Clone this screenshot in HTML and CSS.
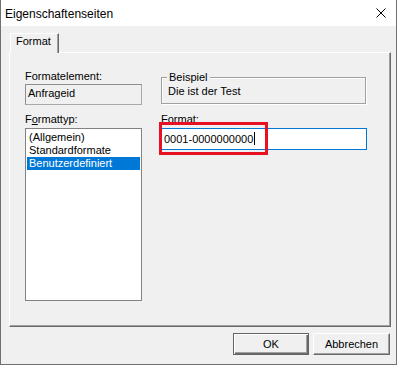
FILE: index.html
```html
<!DOCTYPE html>
<html lang="de">
<head>
    <meta charset="UTF-8">
    <title>Eigenschaftenseiten</title>
    <link rel="stylesheet" href="styles.css">
</head>
<body>

    <div class="window">
        <div class="titlebar">
            <span class="title">Eigenschaftenseiten</span>
            <svg class="close" width="10" height="10" viewBox="0 0 10 10">
                <path d="M0.5 0.5 L9.5 9.5 M9.5 0.5 L0.5 9.5" stroke="#000" stroke-width="1" fill="none"/>
            </svg>
        </div>

        <div class="client">
            <!-- Tab strip -->
            <div class="tabs">
                <div class="tab">Format</div>
            </div>

            <!-- Tab page -->
            <div class="page">
                <div class="cell">
                    <div class="label gap1">Formatelement:</div>
                    <div class="static">Anfrageid</div>
                </div>
                <div class="cell">
                    <div class="group">
                        <div class="legend">Beispiel</div>
                        <div class="sample">Die ist der Test</div>
                    </div>
                </div>

                <div class="cell">
                    <div class="label gap2">F<u>o</u>rmattyp:</div>
                    <div class="list">
                        <div class="item">(Allgemein)</div>
                        <div class="item">Standardformate</div>
                        <div class="item selected">Benutzerdefiniert</div>
                    </div>
                </div>
                <div class="cell marked">
                    <div class="label gap2"><u>F</u>ormat:</div>
                    <div class="field">0001-0000000000<span class="caret"></span></div>
                    <div class="mark"></div>
                </div>
            </div>

            <div class="buttons">
                <div class="btn default">OK</div>
                <div class="btn wide">Abbrechen</div>
            </div>
        </div>
    </div>

</body>
</html>
```

FILE: styles.css
```css
body {
    margin: 0;
    font-family: "Liberation Sans", Arial, sans-serif;
    font-size: 11px;
    line-height: 13px;
    color: #000;
    background: #f0f0f0;
}
.window {
    width: 397px;
    height: 365px;
    box-sizing: border-box;
    border: 1px solid #707070;
    border-top: 0;
    background: #f0f0f0;
}
.titlebar {
    height: 26px;
    background: #fff;
    display: flex;
    align-items: center;
    justify-content: space-between;
    padding: 0 10px 0 4px;
    font-size: 12px;
}
.title {
    line-height: 26px;
    padding-top: 1px;
}
.close {
    display: block;
}
.client {
    padding: 7px 5px 0 8px;
}

/* tabs */
.tabs {
    display: flex;
    height: 19px;
}
.tab {
    position: relative;
    z-index: 1;
    box-sizing: border-box;
    width: 49px;
    height: 20px;
    margin-left: 1px;
    padding: 1px 0 0 5px;
    background: #f0f0f0;
    border-top: 1px solid #fff;
    border-left: 1px solid #fff;
    border-right: 1px solid #696969;
    box-shadow: inset -1px 0 #a0a0a0;
}
.page {
    box-sizing: border-box;
    height: 275px;
    border-top: 1px solid #fff;
    border-left: 1px solid #fff;
    border-right: 1px solid #696969;
    border-bottom: 1px solid #696969;
    box-shadow: inset -1px -1px #a0a0a0;
    padding: 17px 0 0 15px;
    display: grid;
    grid-template-columns: 117px 206px;
    grid-template-rows: 35px auto;
    column-gap: 19px;
    row-gap: 8px;
    align-items: start;
}
.label.gap1 {
    margin-bottom: 1px;
}
.label.gap2 {
    margin-bottom: 2px;
}
.static {
    box-sizing: border-box;
    height: 21px;
    padding: 2px 2px;
    border: 1px solid #a0a0a0;
    border-color: #8e8e8e #a8a8a8 #a8a8a8 #8e8e8e;
    background: #f0f0f0;
}

/* Beispiel group */
.group {
    box-sizing: border-box;
    width: 205px;
    height: 27px;
    margin-top: 7px;
    border: 1px solid #a0a0a0;
    box-shadow: 1px 1px 0 #fff, inset 1px 1px 0 #fff;
}
.legend {
    width: fit-content;
    margin: -7px 0 0 5px;
    padding: 0 2px;
    background: #f0f0f0;
}
.sample {
    margin-top: 1px;
    padding-left: 6px;
}

/* list box */
.list {
    box-sizing: border-box;
    height: 173px;
    padding: 2px 1px;
    border: 1px solid #828282;
    background: #fff;
}
.item {
    height: 13px;
    padding-left: 2px;
}
.item.selected {
    background: #0078d7;
    color: #fff;
}

/* format field */
.marked {
    position: relative;
}
.field {
    box-sizing: border-box;
    height: 22px;
    padding: 3px 2px 0;
    border: 1px solid #0078d7;
    background: #fff;
}
.caret {
    display: inline-block;
    width: 1px;
    height: 13px;
    margin-left: 1px;
    background: #000;
    vertical-align: -2px;
}
.mark {
    position: absolute;
    left: -2px;
    top: 9px;
    width: 109px;
    height: 33px;
    box-sizing: border-box;
    border: 3px solid #e81123;
}

/* buttons */
.buttons {
    display: flex;
    justify-content: flex-end;
    gap: 4px;
    margin-top: 6px;
    padding-right: 1px;
}
.btn {
    box-sizing: border-box;
    width: 76px;
    height: 22px;
    line-height: 20px;
    text-align: center;
    background: #f0f0f0;
    border: 1px solid;
    border-color: #fff #696969 #696969 #fff;
    box-shadow: inset -1px -1px #a0a0a0;
}
.btn.wide {
    width: 77px;
}
.btn.default {
    border: 1px solid #646464;
    box-shadow: inset 1px 1px #fff, inset -1px -1px #696969, inset -2px -2px #a0a0a0;
}
```
